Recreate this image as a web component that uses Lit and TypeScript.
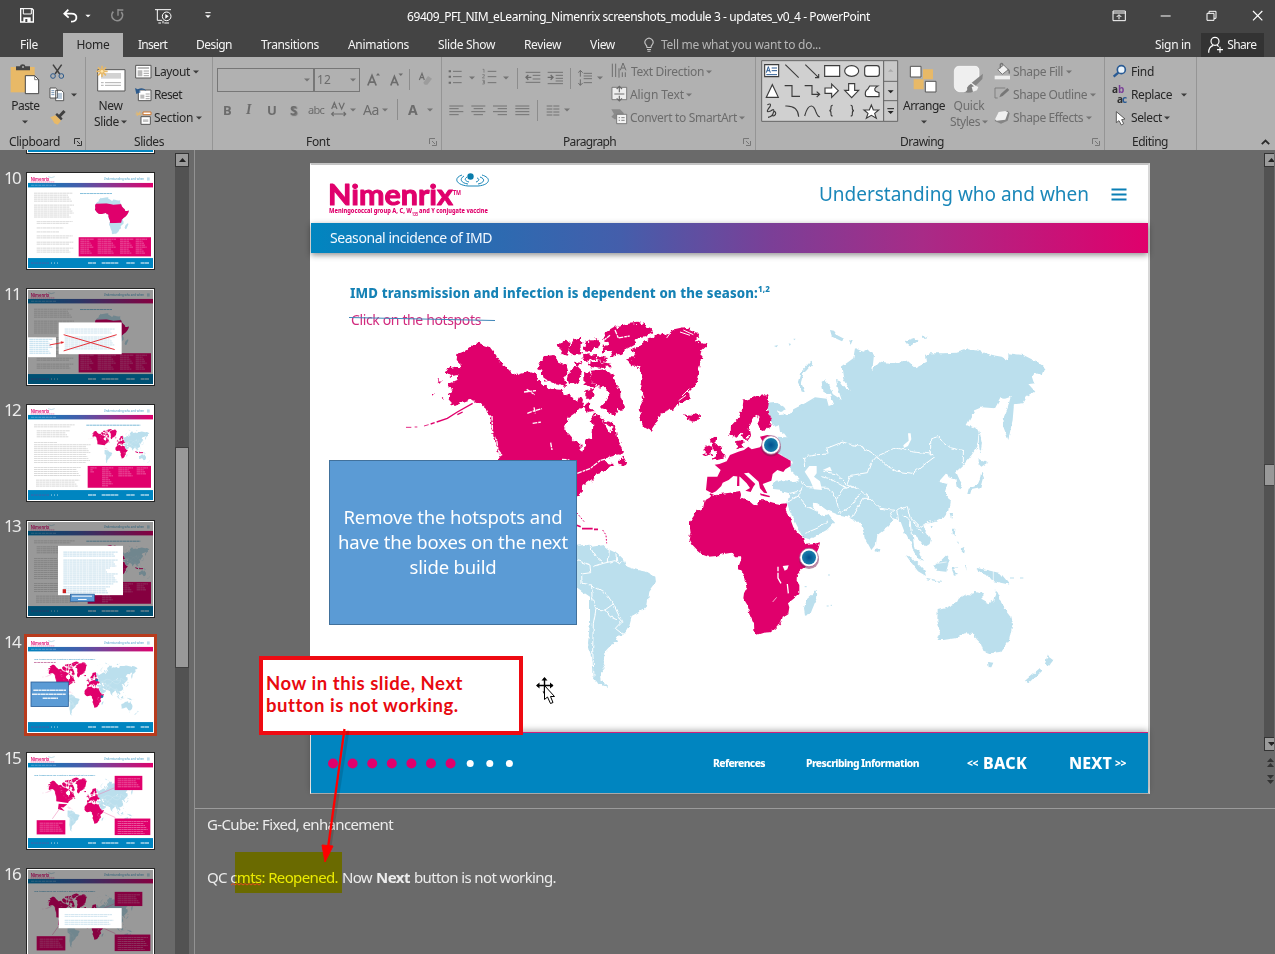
import { LitElement, html, svg, css } from "lit";
import { customElement, property } from "lit/decorators.js";

/** A single-line label tracked so that it fills a given width. */
@customElement("fit-label")
class FitLabel extends LitElement {
  @property() text = "";
  @property({ type: Number }) w = 0;
  static styles = css`
    :host { display: inline-block; white-space: pre; }
    .t { display: inline-block; }
  `;
  render() {
    return html`<span class="t">${this.text}</span>`;
  }
  updated() {
    const el = this.renderRoot.querySelector(".t") as HTMLElement;
    el.style.letterSpacing = "0px";
    const natural = el.getBoundingClientRect().width;
    el.style.letterSpacing = (this.w - natural) / this.text.length + "px";
    this.style.width = this.w + "px";
  }
}

type Item = [number, any];
const t = (text: string, w: number, cls = "") => html`<fit-label class=${cls} .text=${text} .w=${w}></fit-label>`;

/** Lays items out in one row, each starting at its own column line. */
const strip = (cls: string, from: number, to: number, items: Item[]) => {
  const cols = items.map((it, i) => `${(items[i + 1] ? items[i + 1][0] : to) - it[0]}px`).join(" ");
  return html`<div class="strip ${cls}" style=${`padding-left:${items[0][0] - from}px;grid-template-columns:${cols}`}>${items.map(
    (it) => html`<div class="cell">${it[1]}</div>`
  )}</div>`;
};

/** Icon drawn on a grid three times finer than the screen. */
const ic = (x: number, y: number, w: number, h: number, body: any) =>
  html`<svg class="ic" width=${w / 3} height=${h / 3} viewBox="${x} ${y} ${w} ${h}">${body}</svg>`;

const arrow = (dim = false) =>
  html`<svg class="ic" width="6" height="4" viewBox="0 0 6 4"><path d="M0 .5h6L3 3.5z" fill=${dim ? "#757575" : "#3c3c3c"} /></svg>`;
const vsep = html`<div class="vsep"></div>`;
const launcher = (dim = false) =>
  html`<svg class="ic" width="8" height="8" viewBox="0 0 8 8"><path d="M.5 6V.5H6M3 3l3 3M7.5 3v4.5H3" fill="none" stroke=${dim ? "#777" : "#333"} /></svg>`;

/* ---------- world map ---------- */
const africaPath =
  "M450,130 L465,136 480,132 510,128 540,123 543,133 541,142 556,148 570,155 580,164 592,166 598,150 620,152 640,158 662,162 680,160 680,170 676,178 690,205 700,232 715,250 732,264 738,284 758,283 780,277 776,295 765,318 745,345 722,362 711,375 710,392 718,405 718,432 700,447 684,460 688,472 685,490 668,500 664,515 648,535 632,547 610,548 590,554 583,545 582,520 568,490 562,465 550,445 552,430 562,410 556,385 548,370 536,352 542,335 540,322 525,322 515,308 490,312 470,318 445,320 430,315 412,300 398,285 387,265 392,250 390,235 390,215 405,192 415,180 430,172 434,150 448,142Z";

const northAmerica = svg`<g transform="translate(400 310) scale(.33333)"><g filter="url(#rough)" fill="#e0006c">
<path d="M237,98 L215,108 190,125 172,132 170,150 185,165 180,172 165,170 140,178 135,188 150,198 175,195 172,210 148,220 145,232 158,240 145,255 150,262 148,284 165,288 185,278 215,268 240,280 262,298 272,325 275,360 285,390 295,420 300,450 300,520 530,556 545,545 550,525 580,505 590,490 612,484 640,462 622,460 615,450 632,440 655,436 675,425 662,405 652,385 648,362 642,345 628,368 615,345 605,325 590,308 580,318 572,320 580,345 576,385 556,395 550,425 542,420 540,393 520,390 505,372 492,350 500,330 525,312 545,292 552,270 540,262 530,275 520,262 500,256 490,240 455,238 430,225 415,210 405,192 385,185 350,195 340,190 320,170 300,155 285,132 270,112 250,105Z"/>
<path d="M415,165 L435,138 460,135 475,155 500,165 505,190 490,205 502,228 470,225 440,212 425,190Z"/>
<path d="M470,105 L500,92 512,98 508,118 500,134 485,130 480,118Z"/>
<path d="M520,92 l22,-12 6,18 -10,12 8,22 -30,4 -10,-14Z"/>
<path d="M556,98 l36,-14 14,14 -12,14 -14,-2 -6,14 -22,-4Z"/>
<path d="M612,72 L640,55 680,42 715,38 752,54 760,70 740,80 705,88 702,104 678,118 660,134 630,142 640,122 620,120 606,128 612,108 628,98 610,90Z"/>
<path d="M545,136 l40,-4 4,14 -36,8Z M592,138 l32,6 -10,12 -22,-6Z"/>
<path d="M564,158 L600,154 632,162 636,172 606,174 570,168Z"/>
<path d="M575,182 L612,178 640,194 646,215 660,238 662,265 675,290 665,305 655,296 645,318 632,314 622,298 602,292 618,274 626,250 612,232 590,228 572,206Z"/>
<path d="M512,180 l20,-12 14,14 -4,22 -14,18 -18,-4 -6,-18Z M520,158 l20,-6 6,10 -14,6Z"/>
<path d="M552,190 l14,-6 10,28 14,16 -18,6 -18,-12Z M556,240 l22,-4 6,20 -16,12 -12,-10Z"/>
<path d="M545,292 l20,-14 6,14 16,14 -18,2Z M604,328 l34,10 8,18 -20,-8Z"/>
<path d="M655,448 L672,440 684,462 670,468 654,460Z"/>
<path d="M688,120 L720,105 745,85 780,70 800,76 822,58 850,52 880,60 895,82 884,90 924,105 907,120 902,150 894,190 887,225 867,246 870,265 842,280 814,300 782,312 770,335 752,362 730,350 718,325 720,290 730,265 720,235 725,200 718,172 690,164 685,148 706,138 700,124Z"/>
<path d="M852,312 L870,318 882,308 899,312 900,325 882,335 864,330Z"/>
<path d="M112,210 l14,2 -4,6Z M128,262 l8,0 -4,5Z M98,252h5v3h-5Z"/>
</g>
<path d="M18,352 L34,352 M44,351 h8 M72,348 L86,344" fill="none" stroke="#e0006c" stroke-width="2.500"/>
<path d="M92,342 L104,338 M110,336 L142,325 L172,306 L218,280 M172,314 L188,306" fill="none" stroke="#e0006c" stroke-width="4"/>
<path d="M372,246 l36,-4 M380,238 l24,16 M382,310 l22,-8 22,-6 M402,292 l4,18 M398,340 l26,-4 M452,398 l4,22 M532,490 L570,476 600,452 640,440 M276,318 l2,62 12,10 4,30 12,16 M345,190 l42,-10 M430,205 l30,20 30,2 M486,448 l22,2 M600,100 l30,-24 M645,60 l10,24 34,-6 M720,88 l40,-12" fill="none" stroke="#fff" stroke-width="4" stroke-dasharray="14 3 8 2"/>
<path d="M800,84 l10,-14 M840,66 l30,10 M850,60 l30,14 M722,240 l10,24 M868,236 l-22,22 M858,256 l-22,16" fill="none" stroke="#fff" stroke-width="3"/>
</g>`;

const europe = svg`<g transform="translate(680 320) scale(.33333)" fill="#e0006c">
<g filter="url(#rough)">
<path d="M92,350 L110,355 106,370 120,382 132,405 127,417 97,422 110,402 98,385Z M74,384 L92,376 98,388 94,402 74,408Z"/>
<path d="M150,320 L175,295 188,265 190,242 230,228 258,226 264,245 260,270 274,300 270,325 240,332 232,312 242,292 228,284 218,300 206,325 210,345 198,362 190,350 185,338 162,356 148,340Z"/>
<path d="M168,364 l18,-4 4,22 -20,6Z"/></g>
<path d="M118,432 L140,424 150,405 175,395 192,390 205,380 215,388 240,382 250,368 240,350 262,345 285,350 300,385 292,400 332,422 332,438 316,448 310,456 292,450 278,462 274,482 258,488 248,492 262,520 252,518 240,505 236,485 206,458 192,460 226,492 220,500 212,516 196,512 210,504 200,490 180,470 160,468 146,480 128,488 124,498 108,514 96,520 78,510 82,470 112,470 122,450 104,434Z"/>
<path d="M172,466h6v32h-7Z M240,520l30,8 -2,4 -26,-6Z"/>
</g>`;

const asia = svg`<g transform="translate(680 320) scale(.33333)">
<g filter="url(#soft)"><path fill="#bbdfed" d="M260,248 L285,246 318,268 300,276 285,270 298,285 330,282 340,268 375,250 405,232 440,236 446,258 462,252 450,225 430,215 425,185 435,180 448,195 458,222 485,240 480,225 472,198 468,180 480,184 495,205 512,212 500,190 490,175 485,140 520,115 525,85 550,95 565,88 582,105 577,150 600,125 640,130 680,120 705,142 738,125 735,108 750,100 790,100 830,98 865,88 895,92 935,105 965,110 985,122 985,100 1030,105 1070,125 1085,135 1096,145 1088,165 1062,158 1055,168 1062,190 1045,192 1066,215 1040,232 1030,250 1002,253 998,300 985,360 970,320 972,290 984,262 992,230 975,236 962,234 945,265 905,262 885,270 860,315 880,325 888,322 896,335 892,380 870,412 850,435 828,455 838,478 846,492 842,508 830,500 826,478 806,472 800,458 776,485 802,492 795,515 810,540 805,572 790,592 765,603 740,608 728,620 740,635 753,656 748,676 738,682 725,668 712,652 698,640 702,682 714,692 732,724 718,714 698,686 690,660 675,640 662,605 645,595 625,620 592,645 588,672 574,690 555,655 542,605 524,605 510,590 475,584 440,570 412,550 400,548 395,558 425,588 445,582 465,605 440,630 385,660 372,655 355,625 330,575 322,552 328,520 300,512 280,510 275,490 310,480 345,486 362,480 345,462 332,450 335,425 295,400 302,385 292,350 320,352 300,335 296,312 280,318 268,290Z"/>
<path fill="none" stroke="#bbdfed" stroke-width="9" d="M394,128 L366,160 358,188 370,214"/>
<path fill="#bbdfed" d="M450,30 l12,2 10,14 20,10 -6,8 -30,-14Z M504,58 l14,2 -6,14Z M676,62 l26,-8 12,10 -20,12 -10,-4Z M726,50h14v6h-14Z M898,330 l8,40 -5,32 -5,-32Z M896,416 l12,8 14,4 -18,12 -8,-8Z M904,454 l8,20 -8,30 -30,6 -4,14 -8,-2 4,-16 26,-10 8,-18Z M815,582 l5,4 -4,12Z M360,266 l6,-4 6,10Z"/></g>
<path fill="#bbdfed" d="M282,78l12,-3 -4,7Z M326,70l7,2 -4,6Z M340,56l7,0 -4,5Z"/>
<path fill="#fff" d="M388,438 L410,438 410,460 402,470 420,484 426,510 402,508 390,480 374,455Z M428,450 l22,-10 6,14Z M672,384 L670,376 686,362 684,340 692,340 694,358 684,378Z M296,346l16,-6 8,10 -10,2Z"/>
<path fill="none" stroke="#fff" stroke-width="3" stroke-linejoin="round" filter="url(#soft)" d="M374,440 L370,412 410,404 445,402 440,385 488,366 515,374 545,380 590,410 572,430 562,458 512,466 500,496 M590,410 L620,395 655,385 700,396 752,402 752,356 775,350 815,384 850,392 850,432 M590,410 L618,436 650,454 700,460 730,436 765,410 744,392 M430,454 L470,462 500,495 530,505 M424,470 L450,476 500,505 M363,484 L380,500 445,502 466,530 480,580 M470,534 L490,505 525,500 540,510 568,535 M480,580 L512,560 540,520 M515,592 L548,535 568,535 600,565 650,572 682,560 M324,546 L355,528 382,560 415,575 M355,528 L368,500 M650,572 L656,602 M630,575 L640,600 M682,560 L690,592 720,622 750,602 M668,586 L690,600 694,640 M700,606 L726,640 M376,640 L418,622 444,600 M330,520 L362,512"/>
</g>`;

const south = svg`<g transform="translate(560 450) scale(.33333)">
<g filter="url(#soft)"><path fill="#bbdfed" d="M48,288 L75,284 95,290 130,285 145,298 175,312 195,332 202,350 232,360 262,366 286,380 288,398 268,425 262,465 248,480 215,498 208,525 190,555 166,558 174,575 150,588 132,608 136,620 128,640 134,655 120,672 122,690 146,712 115,702 98,680 94,620 84,580 90,520 90,440 68,425 48,410Z"/>
<path fill="#bbdfed" d="M770,422 L772,440 752,490 735,494 732,474 742,446Z M948,292 l10,6 -3,12 -8,-3Z M1038,316 L1058,324 1094,362 1098,378 1074,364 1052,335Z M1100,384 l42,8 0,4 -42,-8Z M1120,345 L1142,332 1160,314 1170,326 1158,365 1130,362Z M1174,354 l18,-2 -10,8 12,12 -12,2Z M1178,235 l8,2 -2,22 -6,-6Z M1202,298 l14,-4 -4,14Z M1172,192 l7,0 -3,14Z M1108,228h10l-3,7Z M1058,292 l14,10 12,30 -10,-6Z M1250,354 L1270,358 1290,362 1322,370 1350,404 1322,398 1295,392 1280,374 1255,366Z M1133,480 L1155,475 1190,458 1196,446 1220,432 1240,434 1246,422 1272,430 1264,446 1288,460 1300,452 1308,418 1318,438 1326,465 1350,496 1357,525 1348,568 1322,606 1290,610 1270,602 1262,580 1250,568 1242,552 1215,550 1185,565 1150,570 1133,570 1140,548 1132,512Z M1284,636 l16,2 -6,14 -8,0Z M1464,616 l16,12 -18,22 -8,-6Z M1440,654 L1444,662 1405,700 1395,692Z M1190,275h5l2,8Z M1215,345h4v14Z"/></g>
<path fill="none" stroke="#fff" stroke-width="3" stroke-linejoin="round" filter="url(#soft)" d="M48,330 L90,345 92,368 65,372 66,400 95,405 96,440 108,478 100,520 98,600 102,680 M95,405 L138,430 160,462 135,480 108,478 M160,462 L185,515 166,535 192,556 M135,480 L150,500 172,510 M90,290 L105,318 130,340 100,350 M130,340 L165,332 180,342 195,332 M148,300 L145,336 M168,312 L170,334"/>
<path fill="none" stroke="#fff" stroke-width="2" d="M1300,362V392 M1120,342L1160,336"/>
<path d="M1380,384h10M1350,384h12M734,410h6M804,375h6M800,468h6M812,466h4" stroke="#bbdfed" stroke-width="3"/>
<path fill="#e0006c" filter="url(#soft)" d=${africaPath}/>
<path fill="none" stroke="#fff" stroke-width="4" d="M654,350v14M654,368L654,384 663,400 M682,402L685,430 "/>
<path fill="none" stroke="#fff" stroke-width="2" d="M650,442L638,456"/>
<path fill="#fff" d="M668,348 l18,-2 -4,12 -8,4Z"/>
<path d="M50,226 L62,230 M66,236 L98,236 M102,238h12" stroke="#e0006c" stroke-width="5"/>
<path d="M128,240 L138,255 140,280 M50,188 L75,218" stroke="#e0006c" stroke-width="3" fill="none" stroke-dasharray="5 5"/>
</g>`;

const world = svg`${northAmerica}${asia}${south}${europe}`;
const hotspot = (x: number, y: number) => svg`<ellipse cx=${x} cy=${y + 2} rx="10" ry="9.5" fill="#7a1b50" opacity=".5"/><circle cx=${x} cy=${y} r="9.3" fill="#fff" stroke="#a56b93" stroke-width=".8"/><circle cx=${x} cy=${y} r="7" fill="url(#spot)"/>`;

/* ---------- thumbnails ---------- */
const rows = (x: number, y: number, w: number, n: number, color = "#8c8c8c", step = 6) =>
  Array.from({ length: n }, (_, i) => svg`<path d="M${x} ${y + i * step}h${w - ((i * 13) % 17)}" stroke=${color} stroke-width="2" stroke-dasharray="11 1 6 1 9 1" opacity=".5"/>`);

const base = svg`<rect width="375" height="284" fill="#fff"/><rect y="254" width="375" height="30" fill="#0085c0"/>`;
const frame = svg`
${base}
<text x="8" y="20" font-size="14" font-weight="700" fill="#e0006c" opacity=".9" textLength="56" lengthAdjust="spacingAndGlyphs">Nimenrix</text>
<path d="M8 24h72" stroke="#e0006c" stroke-width="1.6" stroke-dasharray="5 1" opacity=".8"/><path d="M60 8q10 6 20 0" stroke="#4a9dc0" fill="none"/>
<text x="227" y="18" font-size="9" fill="#2a8fc0" opacity=".85" textLength="121" lengthAdjust="spacingAndGlyphs">Understanding who and when</text>
<path d="M357 12h8M357 15h8M357 18h8" stroke="#2a8fc0" stroke-width="1.5" opacity=".7"/>
<rect y="27" width="375" height="13.5" fill="url(#bar)"/>
<path d="M9 34h75" stroke="#bcd8ee" stroke-width="2" stroke-dasharray="9 2" opacity=".6"/>
<path d="M9 269h56" stroke="#4b5ba5" stroke-width="3" stroke-dasharray="6 2"/><path d="M69 269h24" stroke="#d5ebf5" stroke-width="2.5" stroke-dasharray="3 6"/>
<path d="M180 269h24M221 269h50M295 269h26M338 269h26" stroke="#fff" stroke-width="3.2" stroke-dasharray="12 1"/>`;
const full = svg`<g transform="scale(.4464) translate(-310 -163)">${world}</g>`;
const africaMini = svg`<g transform="translate(100 38) scale(.26)"><path d=${africaPath} fill="#bbdfed"/><path d=${africaPath} fill="#e0006c" clip-path="url(#belt)"/><path d="M770,422 L772,440 752,490 735,494 732,474 742,446Z" fill="#bbdfed"/></g>`;
const slide10 = svg`${frame}${rows(18, 58, 115, 5)}${rows(18, 94, 120, 7)}${rows(26, 143, 108, 2)}<path d="M156 59h96" stroke="#2a8fc0" stroke-width="2.4" stroke-dasharray="9 1" opacity=".7"/>${rows(26, 163, 80, 2, "#8c8c8c", 12)}${rows(26, 187, 108, 2)}${rows(26, 206, 110, 2)}${rows(26, 224, 110, 3)}${africaMini}
<rect x="152" y="191" width="217" height="58" fill="#e0006c"/>${rows(157, 197, 40, 8, "#fff")}${rows(209, 197, 55, 8, "#fff")}${rows(276, 197, 40, 8, "#fff")}${rows(323, 197, 34, 8, "#fff")}`;
const slide12 = svg`${frame}${rows(18, 57, 122, 2)}${rows(26, 75, 100, 4)}${rows(18, 110, 70, 1)}${rows(18, 117, 170, 10)}${rows(18, 186, 140, 5)}${rows(24, 224, 130, 4)}<path d="M175 58h162" stroke="#2a8fc0" stroke-width="2.6" stroke-dasharray="9 1" opacity=".7"/>
<g transform="translate(154 24) scale(.285) translate(-310 -163)">${world}</g><path d="M322 138l8 3M333 141h12" stroke="#e0006c" stroke-width="3"/>
<rect x="179" y="181" width="190" height="66" fill="#e0006c"/>${rows(187, 187, 20, 3, "#fff")}${rows(222, 187, 34, 10, "#fff")}${rows(271, 187, 44, 5, "#fff")}${rows(326, 187, 34, 4, "#fff")}`;
const head14 = svg`<text x="18" y="65" font-size="7.5" font-weight="600" fill="#2a8fc0" opacity=".8" textLength="184" lengthAdjust="spacingAndGlyphs">IMD transmission and infection is dependent on the season:</text>`;
const pinkBox = (x: number, y: number, w: number, h: number) => svg`<rect x=${x} y=${y} width=${w} height=${h} fill="#e0006c"/>${rows(x + 9, y + 9, w - 16, Math.floor((h - 8) / 6), "#fff")}`;
const slide14 = svg`${frame}${head14}<path d="M18 74h65" stroke="#b9558e" stroke-width="2.2" stroke-dasharray="8 2"/>${full}<circle cx="206" cy="127" r="4" fill="#1a78ac"/><circle cx="222" cy="177" r="4" fill="#1a78ac"/>
<rect x="9" y="133" width="112" height="74" fill="#5b9bd5" stroke="#2b5f98" stroke-width="2.5"/><path d="M16 158h98M12 170h102M44 182h46" stroke="#fff" stroke-width="4.500" stroke-dasharray="15 1 8 1" opacity=".85"/>`;
const slide15 = svg`${frame}${head14}${full}<path d="M92 150L118 152 106 162 98 160 110 172 90 166Z" fill="#e0006c"/><path d="M260 102L205 125M73 196L95 165M262 192L225 175" stroke="#ed79b1" stroke-width="1.5"/>${pinkBox(260, 66, 83, 43)}${pinkBox(26, 200, 86, 43)}${pinkBox(260, 195, 107, 50)}`;
const shade = svg`<rect width="375" height="284" opacity=".4"/>`;
const thumbs: Record<number, any> = {
  9: base,
  10: slide10,
  11: svg`${slide10}${shade}<rect y="143" width="84" height="60" fill="#fff"/>${rows(4, 149, 70, 8, "#3a97c9")}<rect x="92" y="98" width="189" height="96" fill="#fff"/>${rows(110, 118, 150, 3, "#68a9cc")}${rows(110, 142, 150, 7, "#68a9cc")}<path d="M107 135L260 180M107 184L266 135M65 166l42-8" stroke="#e3242b" stroke-width="2.8"/><path d="M107 157l-9-2 3 8z" fill="#e3242b"/>`,
  12: slide12,
  13: svg`${slide12}${shade}<rect x="90" y="72" width="195" height="149" fill="#fff"/>${rows(106, 91, 164, 3, "#4c9bc6")}${rows(106, 115, 164, 4, "#4c9bc6")}${rows(106, 139, 140, 3, "#4c9bc6")}${rows(106, 157, 164, 6, "#4c9bc6")}${rows(106, 196, 140, 4, "#4c9bc6")}<rect x="104" y="203" width="10" height="12" fill="#c22"/><rect x="127" y="218" width="72" height="22" fill="#5b9bd5" stroke="#2b5f98" stroke-width="2"/><path d="M132 224h60M150 234h26" stroke="#fff" stroke-width="3"/>`,
  14: slide14,
  15: slide15,
  16: svg`${slide15}${shade}<rect x="92" y="115" width="189" height="61" fill="#fff"/>${rows(110, 135, 142, 2, "#68a9cc")}${rows(110, 152, 146, 3, "#68a9cc")}`,
};

/* ---------- icons ---------- */
const I = {
  save: ic(60, 24, 42, 44, svg`<path d="M62 26h34l4 4v36H62z" fill="none" stroke="#fff" stroke-width="4"/><path d="M70 26h24v16H70z" fill="#444" stroke="#fff" stroke-width="3"/><path d="M70 66V52h22v14" fill="#fff"/><path d="M76 57h6v9h-6z" fill="#444"/>`),
  undo: ic(188, 24, 46, 42, svg`<path d="M204 26l-12 12 13 12M193 38h20q17 0 15 14-2 10-16 10" fill="none" stroke="#fff" stroke-width="5.5"/>`),
  redo: ic(328, 24, 44, 42, svg`<path d="M362 33a16 16 0 1 1-24-1" fill="none" stroke="#909090" stroke-width="5"/><path d="M352 24v20M350 27h18" stroke="#909090" stroke-width="4"/>`),
  show: ic(464, 22, 50, 48, svg`<path d="M464 27h48M471 27v32h14M488 60v8M474 67h8M492 67h14" fill="none" stroke="#fff" stroke-width="3"/><circle cx="499" cy="47" r="13" fill="#444" stroke="#fff" stroke-width="3"/><path d="M495 40l10 7-10 7z" fill="#fff"/>`),
  more: ic(616, 36, 18, 20, svg`<path d="M617 38h16" stroke="#fff" stroke-width="3"/><path d="M617 46h16l-8 8z" fill="#fff"/>`),
  drop: ic(256, 38, 18, 12, svg`<path d="M257 40h16l-8 8z" fill="#fff"/>`),
  ribbonOpt: ic(664, 28, 42, 36, svg`<path d="M667 31h37v29h-37zM667 37h37M685 56V44M678 49l7-7 7 7" fill="none" stroke="#fff" stroke-width="3"/>`),
  min: ic(808, 40, 34, 10, svg`<path d="M810 46h30" stroke="#fff" stroke-width="3"/>`),
  restore: ic(946, 28, 34, 34, svg`<path d="M949 38h21v21h-21zM955 38v-6h21v21h-6" fill="none" stroke="#fff" stroke-width="3"/>`),
  close: ic(1084, 28, 34, 34, svg`<path d="M1087 31l28 28M1115 31l-28 28" stroke="#fff" stroke-width="3.5"/>`),
  bulb: html`<svg class="ic" width="10" height="14" viewBox="0 0 10 14"><path d="M3 9.5Q3 8 2 7a4 4 0 1 1 6 0Q7 8 7 9.500zM3 11.500h4M3.500 13.300h3" fill="none" stroke="#c4c4c4" stroke-width="1.100"/></svg>`,
  share: ic(954, 108, 46, 52, svg`<circle cx="975" cy="124" r="12" fill="none" stroke="#fff" stroke-width="3.500"/><path d="M956 158q0-18 14-22M981 135l5 5M990 140v18M981 149h18" fill="none" stroke="#fff" stroke-width="3.500"/>`),
  paste: ic(36, 192, 92, 96, svg`<path d="M38 204h72v76H38z" fill="#e8b967"/><path d="M54 214v-12h12q0-6 8-6t8 6h14v12z" fill="#454545"/><circle cx="75" cy="204" r="3" fill="#b1b1b1"/><path d="M82 230h28l12 12v42H82z" fill="#fff" stroke="#454545" stroke-width="3"/><path d="M110 230v12h12" fill="none" stroke="#454545" stroke-width="2"/>`),
  cut: ic(146, 190, 48, 48, svg`<path d="M158 192l20 28M184 192l-20 28" stroke="#404040" stroke-width="4.5"/><circle cx="158" cy="226" r="7" fill="none" stroke="#2c5a8c" stroke-width="3"/><circle cx="183" cy="226" r="7" fill="none" stroke="#2c5a8c" stroke-width="3"/>`),
  copy: ic(146, 260, 48, 48, svg`<path d="M149 263h17l5 5v25h-22zM166 270h17l7 7v24h-24z" fill="#fff" stroke="#404040" stroke-width="2.500"/><path d="M153 271h9M153 277h9M153 283h9M171 281h14M171 287h14M171 293h14" stroke="#2c5a8c" stroke-width="2"/>`),
  brush: ic(146, 328, 50, 48, svg`<path d="M150 350l16-6 16 16-10 12-10-4-4-8z" fill="#e8b967"/><path d="M165 342l17 17 5-5-5-6 14-14-7-6-13 14-6-5z" fill="#404040"/>`),
  newSlide: ic(284, 190, 92, 84, svg`<path d="M292 204h82v64h-82z" fill="#fff" stroke="#555" stroke-width="3"/><path d="M302 214h60v17h-60z" fill="#d2d2d2"/><path d="M302 243h8M314 243h48M302 251h8M314 251h48" stroke="#888" stroke-width="2"/><path d="M305 192v34M288 209h34M293 197l24 24M317 197l-24 24" stroke="#e8b967" stroke-width="5"/><circle cx="305" cy="209" r="4" fill="#ffe6a8"/>`),
  layout: ic(404, 192, 52, 48, svg`<path d="M406 196h46v38h-46z" fill="#fff" stroke="#555" stroke-width="3"/><path d="M412 201h34v6h-34zM412 211h14v18h-14z" fill="#bbb"/><path d="M430 213h16M430 220h16M430 227h16" stroke="#777" stroke-width="2"/>`),
  reset: ic(404, 261, 52, 48, svg`<path d="M414 270h38v32h-38z" fill="#fff" stroke="#555" stroke-width="3"/><path d="M420 284h12v12h-12z" fill="#bbb"/><path d="M436 282h12M436 289h12M436 296h12" stroke="#777" stroke-width="2"/><path d="M404 264l4 18 14-6-6-3q10-8 22 0-8-14-26-5z" fill="#2c5a8c"/>`),
  section: ic(406, 330, 52, 48, svg`<path d="M424 350h28v23h-28z" fill="#fff" stroke="#555" stroke-width="3"/><path d="M430 358h16v8h-16z" fill="#c4c4c4"/><path d="M430 336h24v8h-24z" fill="#fff" stroke="#d0772f" stroke-width="3"/><path d="M410 336l12 10M422 334l-10 14M408 342h18" stroke="#e8b967" stroke-width="3"/>`),
};
const g = "#6c6c6c";
const bars = (y: number[], x: number, ws: number[]) => svg`${y.map((v, i) => svg`<path d="M${x} ${v}h${ws[i % ws.length]}" stroke=${g} stroke-width="2.700"/>`)}`;
const P = {
  bullets: ic(716, 51, 42, 48, svg`${bars([55, 71, 89], 731, [26])}<path d="M718 52h7v6h-7zM718 68h7v6h-7zM718 86h7v6h-7z" fill=${g}/>`),
  numbers: ic(818, 51, 44, 48, svg`${bars([55, 71, 89], 835, [26])}<path d="M820 49h4v10M819 65h6v4l-6 6h7M819 82h6v5h-4 4v6h-6" fill="none" stroke=${g} stroke-width="2"/>`),
  dedent: ic(945, 47, 46, 48, svg`${bars([54, 84], 947, [44])}${bars([63, 74], 968, [23])}<path d="M964 69h-15M955 62l-7 7 7 7" fill="none" stroke=${g} stroke-width="4"/>`),
  indent: ic(50, 47, 50, 48, svg`${bars([54, 88], 52, [46])}${bars([63, 72, 80], 76, [22])}<path d="M52 69h15M61 62l7 7-7 7" fill="none" stroke=${g} stroke-width="4"/>`),
  spacing: ic(146, 45, 44, 52, svg`${bars([58, 66, 74, 86], 163, [25])}<path d="M153 50v18M147 56l6-7 7 7M153 76v18M147 87l6 7 7-7" fill="none" stroke=${g} stroke-width="3"/>`),
  left: ic(716, 146, 44, 36, bars([152, 160, 169, 178], 717, [42, 28])),
  center: ic(782, 146, 44, 36, svg`${bars([152, 169], 783, [42])}${bars([160, 178], 790, [28])}`),
  right: ic(849, 146, 44, 36, svg`${bars([152, 169], 849, [42])}${bars([160, 178], 863, [28])}`),
  just: ic(915, 146, 44, 36, bars([152, 160, 169, 178], 916, [42])),
  cols: ic(47, 146, 42, 36, svg`${bars([152, 161, 170, 179], 49, [17])}${bars([152, 161, 170, 179], 69, [18])}`),
  dir: ic(242, 26, 50, 50, svg`<path d="M246 28v40M256 28v40M266 42v28M276 54v14M285 54v14" stroke=${g} stroke-width="3"/><path d="M270 48l8-22 9 22M273 41h11" fill="none" stroke=${g} stroke-width="3"/>`),
  alignText: ic(242, 95, 50, 50, svg`<path d="M245 99h44v37h-44z" fill="#eee" stroke=${g} stroke-width="2.500"/><path d="M252 119h30M267 96v18M259 104l8-8 8 8M267 140v-16M259 132l8 8 8-8" fill="none" stroke=${g} stroke-width="3.500"/>`),
  smart: ic(242, 163, 50, 50, svg`<path d="M243 164h26l12 12-8 8h-14v10h-6l-10-8 8-8z" fill="#8a8a8a"/><path d="M259 179h30v28h-30z" fill="#f4f4f4" stroke=${g} stroke-width="2.500"/><path d="M265 189h4M273 189h10M265 197h4M273 197h10" stroke=${g} stroke-width="2.500"/>`),
  bigA: (up: boolean) => html`<svg class="ic" width="14" height="16" viewBox="0 0 14 16"><path d=${up ? "M.8 13.500L5 3.500l4.200 10M2.500 10.200h5" : "M.8 13.500L4.400 4.500l3.800 9M2.200 10.500h4.400"} fill="none" stroke=${g} stroke-width="1.700"/><path d=${up ? "M9 3.500l2-2.500 2 2.500z" : "M8.500 1.500h4.500l-2.200 2.500z"} fill=${g}/></svg>`,
  clear: ic(624, 50, 44, 46, svg`<path d="M628 74l8-20 7 20M631 67h10" fill="none" stroke=${g} stroke-width="3.500"/><path d="M640 82l14-20 12 8-14 18h-8z" fill="#9c9c9c"/>`),
  av: ic(360, 144, 46, 46, svg`<path d="M362 165l8-19 8 19M365 159h10M384 146l8 19 8-19M362 180h42M368 174l-6 6 6 6M398 174l6 6-6 6" fill="none" stroke=${g} stroke-width="3.6"/>`),
};
const D = {
  arrange: ic(58, 190, 88, 90, svg`<path d="M100 206h30v30h-30zM72 236h30v30H72z" fill="#e8b967"/><path d="M62 197h32v32H62zM107 242h32v32h-32z" fill="#fff" stroke="#555" stroke-width="3"/>`),
  quick: ic(196, 190, 94, 94, svg`<path d="M214 200h48q12 0 12 14v28l-26 34h-34q-14-4-14-18v-44q2-14 14-14z" fill="#efefef" stroke="#fff" stroke-width="2"/><path d="M286 222l-2 16-20 20-12-9z" fill="#858585"/><path d="M250 252l14 12q-4 20-36 14 14-4 10-14 4-8 12-12z" fill="#7f7f7f"/><path d="M252 262l12-4 8 4-4 10-12 4z" fill="#eee"/>`),
  fill: ic(311, 188, 52, 52, svg`<path d="M313 226h46v11h-46z" fill="#efefef"/><path d="M322 208l18-14 14 14-18 14z" fill="#f2f2f2" stroke="#777" stroke-width="3"/><path d="M330 204v-12q5-6 8 2M352 206q8 6 4 14" fill="none" stroke="#777" stroke-width="4"/>`),
  outline: ic(311, 258, 52, 48, svg`<path d="M345 261h-31v30h8" fill="none" stroke="#777" stroke-width="2.500"/><path d="M327 289l4-10 20-18 6 6-20 18z" fill="#777"/>`),
  effects: ic(311, 330, 52, 48, svg`<path d="M324 340l28-8 6 8-6 22-20 9-19-8z" fill="#858585"/><path d="M325 336l20-3 8 4-8 22-26 3-5-4z" fill="#f0f0f0"/>`),
  find: ic(666, 192, 48, 48, svg`<circle cx="694" cy="209" r="12" fill="#eaf3fa" stroke="#2a5b94" stroke-width="5"/><path d="M685 218l-14 12" stroke="#2a5b94" stroke-width="7"/>`),
  select: ic(672, 326, 40, 48, svg`<path d="M679 331v33l8-6 7 13 7-4-6-12 10-2z" fill="#fff" stroke="#444" stroke-width="2.500"/>`),
};
const gallery = ic(693, 24, 411, 186, svg`<path d="M695 26h366v182H695z" fill="#d0d0d0" stroke="#666" stroke-width="3"/><path d="M1061 26h42v182h-42zM1061 88h42M1061 146h42" fill="#c8c8c8" stroke="#666" stroke-width="3"/>
<path d="M1074 59h16l-8-8z" fill="#aaa"/><path d="M1073 115h18l-9 9zM1073 177h18l-9 9z" fill="#222"/><path d="M1072 170h20" stroke="#222" stroke-width="3"/>
<g fill="#fff" stroke="#3c3c3c" stroke-width="3.4"><path d="M704 38h42v36h-42z"/><path d="M884 41h45v32h-45z"/><ellipse cx="965" cy="57" rx="21" ry="16"/><rect x="1004" y="41" width="44" height="32" rx="8"/><path d="M709 136l18-38 18 38z"/><path d="M885 108h20v-12l20 20-20 20v-12h-20z"/><path d="M956 95h18v20h12l-21 22-21-22h12z"/><path d="M1007 132q-4-14 6-20l6-10h24q-14 8-6 16l10 4v12h-34z"/><path d="M1024 159l6 15h16l-12 10 5 15-15-9-15 9 5-15-12-10h16z"/>
<g fill="none"><path d="M766 38l40 39M826 38l40 39M866 66v11h-11M764 101h22v32h24M824 101h22v26h22M860 119l9 8-9 8M712 158q14-6 8 6-16 20 0 14 16-12 10 4-2 12-16 14M730 178q10 0 6 10-4 6-10 2M766 162q38-2 40 32M824 192q8-30 20-30 8 0 14 18 6 16 12 14M908 160q-6 0-5 8 0 8-5 8 5 0 5 8-1 8 5 8M962 160q6 0 5 8 0 8 5 8-5 0-5 8 1 8-5 8"/></g></g>
<path d="M709 62l6-18 6 18M711 56h8M725 48h16M725 56h16M709 68h32" stroke="#2a5b94" fill="none" stroke-width="3"/>`);

@customElement("app-root")
class AppRoot extends LitElement {
  static styles = css`
    :host { display: block; width: 1275px; height: 954px; overflow: hidden; position: relative; background: #6a6a6a; font: 12px/16px "Noto Sans", "Open Sans", sans-serif; color: #262626; }
    .strip { display: grid; align-items: center; box-sizing: border-box; }
    .cell { display: flex; align-items: center; white-space: nowrap; min-width: 0; }
    .ic { display: block; flex: none; overflow: visible; }
    .defs { display: block; height: 0; width: 0; }
    .title { height: 31px; background: #444; color: #fff; }
    .cap { padding-top: 2px; }
    .tabs { height: 26px; background: #444; color: #f4f4f4; }
    .tabs .cell { height: 24px; margin-top: 2px; }
    .home { background: #b1b1b1; color: #262626; width: 60px; height: 24px; display: flex; align-items: center; justify-content: center; }
    .muted { color: #b5b5b5; }
    .sharebtn { background: #333; width: 63px; height: 24px; display: flex; align-items: center; gap: 4px; padding-left: 7px; box-sizing: border-box; }
    .ribbon { display: flex; height: 93px; background: #b1b1b1; }
    .group { box-sizing: border-box; padding-top: 3px; border-right: 1px solid #959595; }
    .group.last { border: 0; flex: 1; display: flex; align-items: flex-end; justify-content: flex-end; padding: 0 5px 5px 0; }
    .body { height: 69px; align-items: start; }
    .body > .cell { align-items: flex-start; }
    .label { height: 25px; }
    .r23 { height: 23px; } .r40 { height: 39px; } .r36 { height: 36px; } .r20 { height: 21px; } .r28 { height: 28px; }
    .big { display: flex; flex-direction: column; align-items: center; width: max-content; }
    .pic { height: 38px; display: flex; align-items: center; }
    .pair { display: flex; align-items: center; gap: 2px; height: 16px; }
    .dim { color: #6c6c6c; }
    .vsep { width: 1px; height: 21px; background: #8c8c8c; }
    .combo { box-sizing: border-box; height: 24px; border: 1px solid #777; display: flex; align-items: center; justify-content: space-between; padding: 0 3px 0 2px; color: #6c6c6c; }
    .c1 { width: 98px; } .c2 { width: 46px; }
    .b { font-weight: 700; } .i { font-style: italic; font-family: "Liberation Serif", serif; font-weight: 700; font-size: 14px; } .u { text-decoration: underline; } .s { text-shadow: 1px 1px 1px #777; } .st { text-decoration: line-through; font-size: 11px; } .f14 { font-size: 14px; } .f13 { font-size: 13px; }
    .rep { display: flex; flex-direction: column; font: 700 10px/9px "Open Sans", sans-serif; color: #2e2e2e; height: 20px; width: 16px; }
    .rep .v { color: #7a3f98; } .rep .bl { color: #2a5b94; }
    .rl { display: flex; align-items: center; height: 10px; } .rl2 { padding-left: 5px; }
    .work { display: flex; height: 804px; }
    .left { width: 176px; overflow: hidden; }
    .list { margin-top: -94px; }
    .item { height: 116px; display: flex; gap: 6px; padding-left: 4px; font-size: 17px; color: #ececec; }
    .num { width: 16px; height: 20px; margin-top: -2px; }
    .thumb { border: 1px solid #242424; background: #fff; padding: 1px; width: 125px; height: 94px; }
    .thumb svg { display: block; filter: blur(.4px); }
    .sel { border-color: #b83b1d; box-shadow: 0 0 0 2px #b83b1d; }
    .sb { width: 14px; margin-right: 1px; margin-left: -1px; padding-top: 3px; box-sizing: content-box; display: flex; flex-direction: column; height: 801px; }
    .btn { width: 12px; height: 12px; border: 1px solid #333; background: #9b9b9b; display: flex; align-items: center; justify-content: center; flex: none; }
    .track { background: #525252; width: 14px; }
    .th { width: 12px; border: 1px solid #404040; background: #999; flex: none; }
    .h1 { height: 280px; } .h2 { height: 219px; } .grow { flex: 1; }
    .h3 { height: 297px; } .h4 { height: 20px; } .h5 { height: 251px; }
    .gut { width: 4px; border-right: 1px solid #929292; }
    .main { flex: 1; display: flex; flex-direction: column; min-width: 0; }
    .stage { height: 658px; display: flex; border-bottom: 1px solid #9b9b9b; }
    .slide { margin: 13px 0 0 115px; width: 840px; height: 631px; box-sizing: border-box; background: #fff; border: 1px solid #b5b5b5; border-top: 2px solid #c4c4c4; border-right: 2px solid #d8d8d8; border-left-color: #fff; position: relative; display: flex; flex-direction: column; }
    .head { height: 58px; color: #1a87b9; }
    .t1 { font-size: 19px; line-height: 24px; }
    .band { height: 30px; background: linear-gradient(90deg, #0086c0 0%, #246fb3 17%, #445eab 37%, #7b3f97 55%, #a82b87 73%, #e0006c 100%); box-shadow: 0 2px 6px rgba(0, 0, 0, .45); color: #f2f8ff; font-size: 14px; z-index: 1; }
    .canvas { flex: 1; position: relative; }
    .map { position: absolute; left: 0; top: 0; }
    .h { font-size: 13.2px; font-weight: 800; color: #1682b5; line-height: 16px; padding: 32px 0 0 39px; height: 48px; box-sizing: border-box; position: relative; display: flex; }
    .sup { font-size: 8px; margin-top: -4px; }
    .click { font-size: 14px; color: #d22a7e; padding: 11px 0 0 40px; position: relative; line-height: 16px; }
    .blue { position: absolute; left: 18px; top: 207px; width: 248px; height: 165px; box-sizing: border-box; background: #5b9bd5; border: 1px solid #41719c; color: #fff; font-size: 18.5px; line-height: 25px; display: flex; flex-direction: column; align-items: center; justify-content: center; padding-bottom: 2px; }
    .foot { height: 61px; background: #0085c0; border-top: 1px solid #d0207c; box-sizing: border-box; color: #fff; font-weight: 800; font-size: 10.3px; box-shadow: 0 -2px 6px rgba(0, 0, 0, .3); }
    .nav { font-size: 16px; }
    .vs { width: 10px; margin-left: 114px; padding-top: 3px; overflow: hidden; display: flex; flex-direction: column; }
    .dbl { padding-top: 7px; }
    .notes { flex: 1; color: #ececec; font-size: 15px; line-height: 20px; position: relative; padding-top: 5px; }
    .n2 { margin-top: 33px; height: 20px; }
    .mark { position: absolute; left: 40px; top: 43px; width: 107px; height: 41px; background: #ff0; mix-blend-mode: multiply; }
    .callout { position: absolute; left: 259px; top: 656px; width: 264px; height: 79px; box-sizing: border-box; border: 4px solid #ee0a12; background: #fff; color: #e80a10; font: 700 18.5px/22px Lato, sans-serif; padding: 12px 3px; display: flex; flex-direction: column; }
    .over { position: absolute; left: 0; top: 0; pointer-events: none; }
  `;

  group(from: number, to: number, label: Item[], body: Item[]) {
    return html`<div class="group" style=${`width:${to - from}px`}>${strip("body", from, to - 1, body)}${strip("label", from, to - 1, label)}</div>`;
  }

  ribbon() {
    const shape = (icon: any, text: string, w: number) => strip("r23 dim", 994, 1103, [[994, icon], [1013, t(text, w)], [1016 + w, arrow(true)]]);
    return html`<div class="ribbon">
      ${this.group(0, 86, [[9, t("Clipboard", 51)], [74, launcher()]], [
        [10, html`<div class="big"><div class="pic">${I.paste}</div>${t("Paste", 28)}<div class="pair">${arrow()}</div></div>`],
        [49, html`<div>${strip("r23", 49, 85, [[49, I.cut]])}${strip("r23", 49, 85, [[49, I.copy], [71, arrow()]])}${strip("r23", 49, 85, [[49, I.brush]])}</div>`],
      ])}
      ${this.group(86, 213, [[134, t("Slides", 30)]], [
        [94, html`<div class="big"><div class="pic">${I.newSlide}</div>${t("New", 24)}<div class="pair">${t("Slide", 25)}${arrow()}</div></div>`],
        [135, html`<div>${strip("r23", 135, 212, [[135, I.layout], [154, t("Layout", 36)], [193, arrow()]])}${strip("r23", 135, 212, [[135, I.reset], [154, t("Reset", 28)]])}${strip("r23", 135, 212, [[135, I.section], [154, t("Section", 39)], [196, arrow()]])}</div>`],
      ])}
      ${this.group(213, 442, [[306, t("Font", 24)], [429, launcher(true)]], [
        [217, html`<div>${strip("r40", 217, 441, [[217, html`<div class="combo c1"><span></span>${arrow(true)}</div>`], [314, html`<div class="combo c2">${t("12", 14)}${arrow(true)}</div>`], [367, P.bigA(true)], [390, P.bigA(false)], [409, vsep], [418, P.clear]])}
        ${strip("r20 dim", 217, 441, [[223, t("B", 8, "b f13")], [246, t("I", 6, "i")], [267, t("U", 9, "b u f13")], [290, t("S", 9, "b s f13")], [308, t("abc", 16, "st")], [331, P.av], [350, arrow(true)], [363, t("Aa", 16, "f14")], [382, arrow(true)], [397, vsep], [408, t("A", 10, "b f14")], [427, arrow(true)]])}</div>`],
      ])}
      ${this.group(442, 756, [[563, t("Paragraph", 53)], [743, launcher(true)]], [
        [448, html`<div>${strip("r36", 448, 611, [[448, P.bullets], [469, arrow(true)], [482, P.numbers], [503, arrow(true)], [517, vsep], [525, P.dedent], [547, P.indent], [570, vsep], [578, P.spacing], [597, arrow(true)]])}
        ${strip("r28", 448, 611, [[449, P.left], [471, P.center], [493, P.right], [515, P.just], [537, vsep], [546, P.cols], [564, arrow(true)]])}</div>`],
        [611, html`<div class="dim">${strip("r23", 611, 755, [[611, P.dir], [631, t("Text Direction", 73)], [706, arrow(true)]])}${strip("r23", 611, 755, [[611, P.alignText], [630, t("Align Text", 54)], [686, arrow(true)]])}${strip("r23", 611, 755, [[611, P.smart], [630, t("Convert to SmartArt", 107)], [739, arrow(true)]])}</div>`],
      ])}
      ${this.group(756, 1105, [[900, t("Drawing", 44)], [1092, launcher(true)]], [
        [761, html`<div>${strip("shapes", 761, 898, [[761, gallery]])}</div>`],
        [903, html`<div class="big"><div class="pic">${D.arrange}</div>${t("Arrange", 42)}<div class="pair">${arrow()}</div></div>`],
        [950, html`<div class="big dim"><div class="pic">${D.quick}</div>${t("Quick", 31)}<div class="pair">${t("Styles", 30)}${arrow(true)}</div></div>`],
        [994, html`<div>${shape(D.fill, "Shape Fill", 50)}${shape(D.outline, "Shape Outline", 74)}${shape(D.effects, "Shape Effects", 70)}</div>`],
      ])}
      ${this.group(1105, 1197, [[1132, t("Editing", 36)]], [
        [1112, html`<div>${strip("r23", 1112, 1196, [[1112, D.find], [1131, t("Find", 23)]])}
        ${strip("r23", 1112, 1196, [[1112, html`<div class="rep"><div class="rl">${t("a", 6)}${t("b", 6, "v")}</div><div class="rl rl2">${t("a", 5)}${t("c", 5, "bl")}</div></div>`], [1131, t("Replace", 41)], [1181, arrow()]])}
        ${strip("r23", 1112, 1196, [[1114, D.select], [1131, t("Select", 31)], [1164, arrow()]])}</div>`],
      ])}
      <div class="group last"><svg class="ic" width="9" height="6" viewBox="0 0 9 6"><path d="M.8 5.200L4.500 1.500 8.200 5.200" fill="none" stroke="#2b2b2b" stroke-width="1.800"/></svg></div>
    </div>`;
  }

  slide() {
    const dots = Array.from({ length: 10 }, (_, i) => svg`<circle cx=${333 + i * 19.6} cy="10.5" r=${i < 7 ? 5 : 3.5} fill=${i < 7 ? "#e0006c" : "#fff"}/>`);
    return html`<div class="slide">
      ${strip("head", 311, 1148, [
        [329, html`<svg class="ic" width="160" height="48" viewBox="329 169 160 48" fill="#e0006c">
          <text x="328" y="204" font-family="Lato" font-weight="700" font-size="28" stroke="#e0006c" stroke-width="1" stroke-linejoin="round" textLength="125" lengthAdjust="spacingAndGlyphs">Nimenrix</text>
          <text x="453" y="194" font-size="7" font-weight="700" textLength="8" lengthAdjust="spacingAndGlyphs">TM</text>
          <text x="329" y="211.500" font-size="7.500" font-weight="800" textLength="83" lengthAdjust="spacingAndGlyphs">Meningococcal group A, C, W</text>
          <text x="412" y="215" font-size="4.500" font-weight="700" textLength="6" lengthAdjust="spacingAndGlyphs">135</text>
          <text x="419" y="211.500" font-size="7.500" font-weight="800" textLength="69" lengthAdjust="spacingAndGlyphs">and Y conjugate vaccine</text>
          <g fill="none" stroke="#1a87b9"><path d="M462 174c-9 3-6 10 6 11h10c12-1 14-8 4-11M464 175c-5 3-3 7 4 8M467 176c-3 2-2 4 2 5M480 176c6 2 4 6-2 7M477 177c3 1 2 3-1 4" stroke-width="1"/></g><circle cx="470.500" cy="175.500" r="3.200" fill="#0a7cab"/></svg>`],
        [819, t("Understanding who and when", 270, "t1")],
        [1111, html`<svg class="ic" width="16" height="14" viewBox="0 0 16 14"><path d="M.500 2.500h15M.500 7.500h15M.500 12.500h15" stroke="#0a7fb5" stroke-width="2.200"/></svg>`],
      ])}
      ${strip("band", 311, 1148, [[330, t("Seasonal incidence of IMD", 162)]])}
      <div class="canvas">
        <svg class="map" width="837" height="478" viewBox="311 253 837 478">${world}${hotspot(771, 445)}${hotspot(809, 557.5)}</svg>
        <div class="h">${t("IMD transmission and infection is dependent on the season:", 408)}<span class="sup">${t("1,2", 12)}</span></div>
        <div class="click">${t("Click on the hotspots", 130)}</div>
        <div class="blue">${t("Remove the hotspots and", 219)}${t("have the boxes on the next", 230)}${t("slide build", 87)}</div>
      </div>
      ${strip("foot", 311, 1148, [
        [311, html`<svg class="ic" width="220" height="20" viewBox="311 0 220 20">${dots}</svg>`],
        [713, t("References", 52)],
        [806, t("Prescribing Information", 113)],
        [967, t("<<", 11)],
        [983, t("BACK", 44, "nav")],
        [1069, t("NEXT", 43, "nav")],
        [1115, t(">>", 11)],
      ])}
    </div>`;
  }

  render() {
    return html`
      <svg class="defs"><defs>
        <filter id="rough" x="-5%" y="-5%" width="110%" height="110%"><feTurbulence type="fractalNoise" baseFrequency=".07" numOctaves="2" seed="4" result="n"/><feDisplacementMap in="SourceGraphic" in2="n" scale="20" xChannelSelector="R" yChannelSelector="G"/></filter>
        <filter id="soft" x="-5%" y="-5%" width="110%" height="110%"><feTurbulence type="fractalNoise" baseFrequency=".06" numOctaves="2" seed="9" result="n"/><feDisplacementMap in="SourceGraphic" in2="n" scale="12" xChannelSelector="R" yChannelSelector="G"/></filter>
        <linearGradient id="bar"><stop stop-color="#0086c0"/><stop offset=".4" stop-color="#445eab"/><stop offset=".6" stop-color="#7b3f97"/><stop offset="1" stop-color="#e0006c"/></linearGradient>
        <radialGradient id="spot"><stop stop-color="#00508f"/><stop offset="1" stop-color="#1a7fac"/></radialGradient>
        <clipPath id="belt"><path d="M380 200L520 195 600 210 740 200 800 260 760 350 700 380 690 420 560 425 540 330 380 330Z"/></clipPath>
      </defs></svg>
      ${strip("title", 0, 1275, [[20, I.save], [63, I.undo], [85, I.drop], [110, I.redo], [155, I.show], [205, I.more], [407, html`<div class="cap">${t("69409_PFI_NIM_eLearning_Nimenrix screenshots_module 3 - updates_v0_4 - PowerPoint", 463)}</div>`], [1112, I.ribbonOpt], [1160, I.min], [1206, I.restore], [1252, I.close]])}
      ${strip("tabs", 0, 1275, [[20, t("File", 18)], [63, html`<div class="home">${t("Home", 33)}</div>`], [138, t("Insert", 29)], [196, t("Design", 36)], [261, t("Transitions", 58)], [348, t("Animations", 61)], [438, t("Slide Show", 57)], [524, t("Review", 37)], [590, t("View", 25)], [644, I.bulb], [661, t("Tell me what you want to do...", 160, "muted")], [1155, t("Sign in", 36)], [1201, html`<div class="sharebtn">${I.share}${t("Share", 29)}</div>`]])}
      ${this.ribbon()}
      <div class="work">
        <div class="left"><div class="list">${[9, 10, 11, 12, 13, 14, 15, 16].map(
          (n) => html`<div class="item"><div class="num">${n > 9 ? t(String(n), 16) : ""}</div><div class="thumb ${n === 14 ? "sel" : ""}"><svg width="125" height="94" viewBox="0 0 375 284" preserveAspectRatio="none">${thumbs[n]}</svg></div></div>`
        )}</div></div>
        <div class="sb"><div class="btn"><svg class="ic" width="7" height="4"><path d="M0 4h7L3.500 0z" fill="#222"/></svg></div><div class="track h1"></div><div class="th h2"></div><div class="track grow"></div></div>
        <div class="gut"></div>
        <div class="main">
          <div class="stage">${this.slide()}
            <div class="vs"><div class="btn"><svg class="ic" width="7" height="4"><path d="M0 4h7L3.500 0z" fill="#222"/></svg></div><div class="track h3"></div><div class="th h4"></div><div class="track h5"></div><div class="btn"><svg class="ic" width="7" height="4"><path d="M0 0h7L3.500 4z" fill="#222"/></svg></div>
              <div class="dbl"><svg class="ic" width="12" height="28" viewBox="0 0 12 28"><path d="M3 4h7L6.500 0zM3 9h7L6.500 5zM3 17h7L6.500 21zM3 22h7L6.500 26z" fill="#333"/></svg></div></div>
          </div>
          <div class="notes">
            ${strip("n1", 195, 1275, [[207, t("G-Cube: Fixed, enhancement", 186)]])}
            ${strip("n2", 195, 1275, [[207, t("QC cmts: Reopened.", 131)], [342, t("Now", 30)], [376, t("Next", 34, "b")], [414, t("button is not working.", 142)]])}
            <div class="mark"></div>
          </div>
        </div>
      </div>
      <div class="callout">${t("Now in this slide, Next", 197)}${t("button is not working.", 192)}</div>
      <svg class="over" width="1275" height="954">
        <path d="M349 317.500L495 320.500" stroke="#3f86b8" stroke-width="1"/>
        <path d="M348 730L330 846" stroke="#000" stroke-opacity=".12" stroke-width="3"/>
        <path d="M344.500 729L328 848" stroke="#f00" stroke-width="2.300"/><path d="M325 862l-3-17 11 1z" fill="#f00" stroke="#f00"/>
        <path d="M231 885l2-1.500 2 1.500 2-1.500 2 1.500 2-1.500 2 1.500 2-1.500 2 1.500 2-1.500 2 1.500 2-1.500 2 1.500 2-1.500 2 1.500 2-1.500" fill="none" stroke="#e0501c"/>
        <g stroke="#000" stroke-width="1.400" fill="none"><path d="M544.500 678v16M537 685.500h16"/></g><path d="M544.500 677l-3 3.500h6zM544.500 694l-2-2.500h4zM536 685.500l3.500-3v6zM553.500 685.500l-3.500-3v6z"/>
        <path d="M544.500 685.500v14l3-2.500 3 6.500 2.500-1-2.500-6h4z" fill="#fff" stroke="#000"/>
      </svg>`;
  }
}
